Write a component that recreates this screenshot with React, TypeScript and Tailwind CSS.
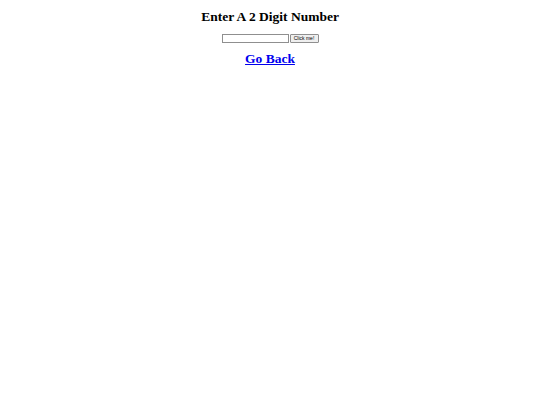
export default function App() {
  return (
    <div className="flex min-h-[405px] w-full flex-col items-center bg-white font-['Liberation_Serif',serif] text-black">
      <h1 className="mt-[9px] text-[13.5px] font-bold leading-[16px]">Enter A 2 Digit Number</h1>
      <div className="mt-[9px] flex items-center gap-[1px]">
        <input
          type="text"
          className="h-[9px] w-[67px] border border-[#8f8f8f] bg-white px-[1px] text-[5px] outline-none"
        />
        <button className="flex h-[9px] w-[29px] items-center justify-center rounded-[1px] border border-[#8f8f8f] bg-[#efefef] font-['Liberation_Sans',sans-serif] text-[5px] leading-[7px] text-black">
          Click me!
        </button>
      </div>
      <a href="#" className="mt-[8px] text-[13.5px] font-bold leading-[16px] text-[#0000ee] underline">
        Go Back
      </a>
    </div>
  );
}
